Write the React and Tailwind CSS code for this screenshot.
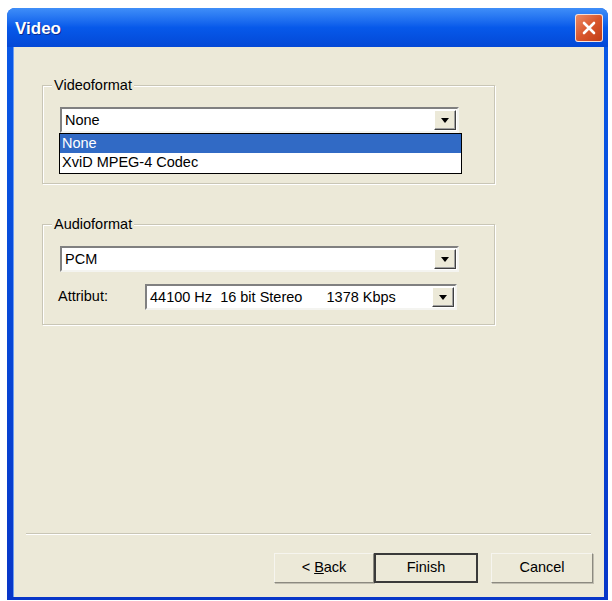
import React from 'react';

const font = { fontFamily: '"Liberation Sans", Arial, sans-serif' };

function Arrow() {
    return (
        <div className="w-[22px] h-full bg-[#ece9d8] border border-t-white border-l-white border-r-[#404040] border-b-[#404040] shadow-[inset_-1px_-1px_0_#a0a0a0] flex items-center justify-center">
            <svg width="8" height="5" viewBox="0 0 8 5">
                <path d="M0 0h8L4 5z" fill="#000" />
            </svg>
        </div>
    );
}

function Combo({ value, width, children }) {
    return (
        <div
            className="relative h-[26px] bg-white border-2 border-t-[#808080] border-l-[#808080] border-r-[#f4f4f0] border-b-[#f4f4f0] flex items-center"
            style={{ width }}
        >
            <span className="flex-1 pl-[3px] text-[14.5px] text-black whitespace-pre leading-none">{value}</span>
            <div className="h-full p-[1px]">
                <Arrow />
            </div>
            {children}
        </div>
    );
}

function GroupBox({ title, className, children }) {
    return (
        <div className={`ml-[29px] w-[453px] border border-[#c9c6b6] shadow-[inset_1px_1px_0_#fff,1px_1px_0_#fff] pl-[17px] ${className}`}>
            <div className="-mt-[9px] -ml-[8px] w-fit px-[2px] bg-[#ece9d8] text-[14.5px] leading-[17px] text-black">
                {title}
            </div>
            {children}
        </div>
    );
}

export default function App() {
    return (
        <div className="w-[612px] h-[601px] bg-white pt-2 pl-[7px]" style={font}>
            <div className="w-[601px] h-[592px] flex flex-col rounded-t-[8px] overflow-hidden bg-gradient-to-b from-[#0a5ae8] to-[#0836c8]">
                {/* Title bar */}
                <div className="h-[39px] shrink-0 flex items-center justify-between pl-[8px] pr-[5px] bg-gradient-to-b from-[#3f8ef8] via-[#0759ea] to-[#0448d6]">
                    <span className="mt-[3px] text-white font-bold text-[17px] [text-shadow:1px_1px_0_#0a2a90]">Video</span>
                    <button className="w-[28px] h-[28px] rounded-[3px] border border-white/80 bg-gradient-to-br from-[#ec8a64] via-[#d9562c] to-[#c13d16] flex items-center justify-center">
                        <svg width="14" height="14" viewBox="0 0 14 14">
                            <path d="M2 2l10 10M12 2L2 12" stroke="#fff" strokeWidth="2.6" strokeLinecap="round" />
                        </svg>
                    </button>
                </div>

                {/* Body */}
                <div className="flex-1 ml-[6px] mr-[4px] mb-[3px] bg-[#ece9d8] shadow-[inset_1px_0_0_#6b9cf0] flex flex-col pt-[38px]">
                    <GroupBox title="Videoformat" className="h-[99px]">
                        <div className="mt-[13px]">
                            <Combo value="None" width={399}>
                                <div className="absolute left-[-3px] top-[24px] w-[403px] h-[41px] bg-white border border-black text-[14.5px] leading-[19px] flex flex-col">
                                    <div className="h-[19px] bg-[#316ac5] text-white pl-[2px]">None</div>
                                    <div className="h-[19px] text-black pl-[2px]">XviD MPEG-4 Codec</div>
                                </div>
                            </Combo>
                        </div>
                    </GroupBox>

                    <GroupBox title="Audioformat" className="h-[101px] mt-[40px]">
                        <div className="mt-[13px]">
                            <Combo value="PCM" width={399} />
                        </div>
                        <div className="mt-[12px] flex items-center">
                            <span className="w-[87px] -ml-[2px] text-[14.5px] text-black">Attribut:</span>
                            <Combo value={'44100 Hz  16 bit Stereo      1378 Kbps'} width={312} />
                        </div>
                    </GroupBox>

                    {/* Footer */}
                    <div className="mt-auto">
                        <div className="mx-[13px] border-t border-[#c9c6b6] border-b border-b-white" />
                        <div className="flex justify-end pt-[18px] pb-[14px] pr-[11px] text-[14.5px] text-black">
                            <button className="w-[100px] h-[30px] bg-[#ece9d8] border border-t-[#f6f5ef] border-l-[#f6f5ef] border-r-[#8c8a80] border-b-[#8c8a80] shadow-[1px_1px_0_#c0bdb0]">
                                &lt; <span className="underline">B</span>ack
                            </button>
                            <button className="w-[104px] h-[30px] bg-[#ece9d8] border-2 border-[#3a3a3a]">
                                Finish
                            </button>
                            <button className="ml-[13px] w-[102px] h-[30px] bg-[#ece9d8] border border-t-[#f6f5ef] border-l-[#f6f5ef] border-r-[#8c8a80] border-b-[#8c8a80] shadow-[1px_1px_0_#c0bdb0]">
                                Cancel
                            </button>
                        </div>
                    </div>
                </div>
            </div>
        </div>
    );
}
